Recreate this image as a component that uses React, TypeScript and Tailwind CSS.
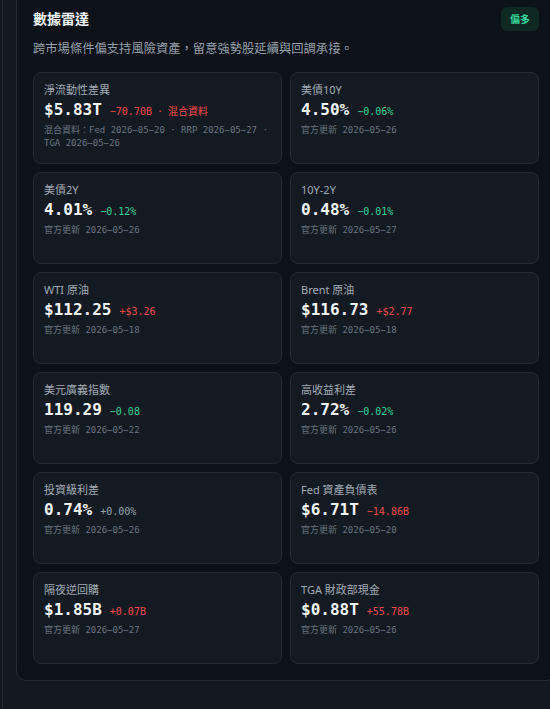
import React from "react";

type Tone = "up" | "down" | "flat";

type Metric = {
  label: string;
  value: string;
  delta: string;
  tone: Tone;
  note?: string;
  source: string;
};

const metrics: Metric[] = [
  {
    label: "淨流動性差異",
    value: "$5.83T",
    delta: "−70.70B",
    tone: "down",
    note: "混合資料",
    source: "混合資料：Fed 2026−05−20 · RRP 2026−05−27 · TGA 2026−05−26",
  },
  { label: "美債10Y", value: "4.50%", delta: "−0.06%", tone: "up", source: "官方更新 2026−05−26" },
  { label: "美債2Y", value: "4.01%", delta: "−0.12%", tone: "up", source: "官方更新 2026−05−26" },
  { label: "10Y-2Y", value: "0.48%", delta: "−0.01%", tone: "up", source: "官方更新 2026−05−27" },
  { label: "WTI 原油", value: "$112.25", delta: "+$3.26", tone: "down", source: "官方更新 2026−05−18" },
  { label: "Brent 原油", value: "$116.73", delta: "+$2.77", tone: "down", source: "官方更新 2026−05−18" },
  { label: "美元廣義指數", value: "119.29", delta: "−0.08", tone: "up", source: "官方更新 2026−05−22" },
  { label: "高收益利差", value: "2.72%", delta: "−0.02%", tone: "up", source: "官方更新 2026−05−26" },
  { label: "投資級利差", value: "0.74%", delta: "+0.00%", tone: "flat", source: "官方更新 2026−05−26" },
  { label: "Fed 資產負債表", value: "$6.71T", delta: "−14.86B", tone: "down", source: "官方更新 2026−05−20" },
  { label: "隔夜逆回購", value: "$1.85B", delta: "+0.07B", tone: "down", source: "官方更新 2026−05−27" },
  { label: "TGA 財政部現金", value: "$0.88T", delta: "+55.78B", tone: "down", source: "官方更新 2026−05−26" },
];

const toneClass: Record<Tone, string> = {
  up: "text-[#34d399]",
  down: "text-[#f04b4b]",
  flat: "text-[#9aa3ad]",
};

const sans = "font-['Noto_Sans','Noto_Sans_CJK_TC',sans-serif]";
const mono = "font-['DejaVu_Sans_Mono','Noto_Sans_CJK_TC',monospace]";

const MetricCard: React.FC<{ m: Metric }> = ({ m }) => (
  <div className="h-[92px] rounded-lg border border-[#242c36] bg-[#141a21] px-[10px] pt-[9px]">
    <div className={`${sans} text-[11px] leading-4 text-[#a3acb6]`}>{m.label}</div>
    <div className="mt-[1px] flex items-baseline gap-2">
      <span className={`${mono} text-base font-bold leading-[22px] text-[#f2f5f8]`}>
        {m.value}
      </span>
      <span className={`${mono} text-[10px] ${toneClass[m.tone]}`}>
        {m.delta}
        {m.note && (
          <>
            <span className="mx-[5px]">·</span>
            <span className={sans}>{m.note}</span>
          </>
        )}
      </span>
    </div>
    <div className={`${mono} mt-[3px] text-[9px] leading-[13px] text-[#6b7581]`}>{m.source}</div>
  </div>
);

const App: React.FC = () => {
  return (
    <div className="min-h-screen overflow-hidden bg-[#121920] pl-[2px]">
      <div className="min-h-screen border-l border-[#222a33] pl-[13px]">
        <section className="w-[540px] rounded-b-[10px] border-x border-b border-[#232b34] bg-[#0d1218] px-4 pb-4 pt-[7px]">
          <div className="flex items-center justify-between">
            <h2 className={`${sans} text-[14px] font-bold leading-[22px] text-[#eef2f6]`}>
              數據雷達
            </h2>
            <span
              className={`${sans} flex h-6 w-[38px] items-center justify-center rounded-md bg-[#0e2822] text-[10px] font-bold text-[#34d399]`}
            >
              偏多
            </span>
          </div>
          <p className={`${sans} mt-[9px] text-[12.3px] leading-[18px] text-[#98a1ab]`}>
            跨市場條件偏支持風險資產，留意強勢股延續與回調承接。
          </p>
          <div className="mt-[14px] grid grid-cols-2 gap-2">
            {metrics.map((m) => (
              <MetricCard key={m.label} m={m} />
            ))}
          </div>
        </section>
      </div>
    </div>
  );
};

export default App;
